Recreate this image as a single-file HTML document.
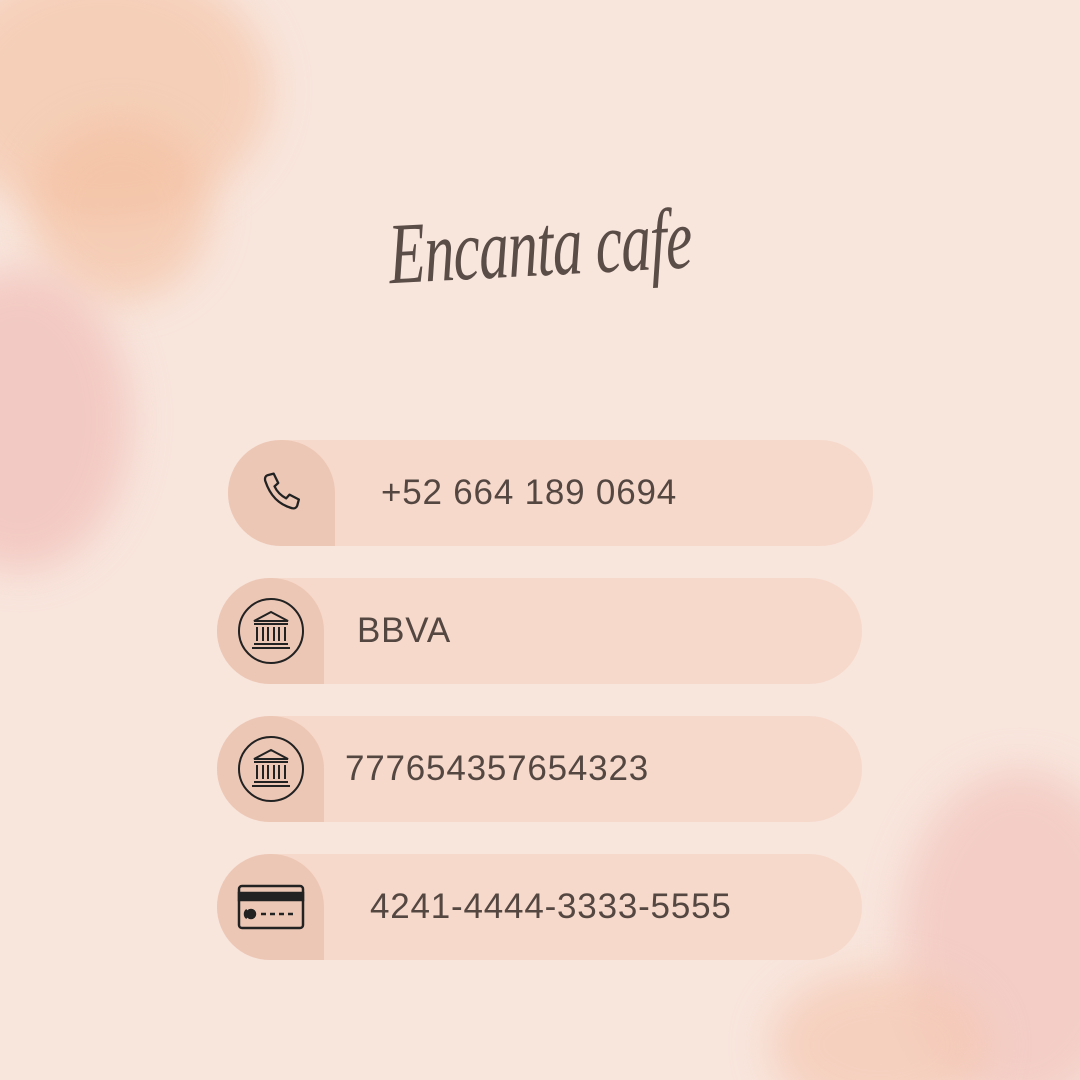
<!DOCTYPE html>
<html><head><meta charset="utf-8"><style>
html,body{margin:0;width:1080px;height:1080px;overflow:hidden}
body{background:#f8e5dc;position:relative;font-family:"Liberation Sans",sans-serif}
.b{position:absolute;border-radius:50%;filter:blur(20px)}
.row{position:absolute;height:106px;width:645px;background:#f6d9cb;border-radius:53px}
.ic{position:absolute;left:0;top:0;width:107px;height:106px;background:#edc7b5;border-radius:53px 53px 0 53px;display:flex;align-items:center;justify-content:center}
.t{position:absolute;top:0;line-height:106px;font-size:35px;color:#544742;letter-spacing:0.8px}
h1{position:absolute;left:386px;top:205px;margin:0;font:italic 400 60px "Liberation Serif",cursive;color:#5a4c47;letter-spacing:-1px;transform:rotate(-3deg) scaleY(1.45);transform-origin:left top;white-space:nowrap}
</style></head><body>
<div class="b" style="left:-60px;top:-40px;width:330px;height:260px;background:#f5c8ad;opacity:.75"></div>
<div class="b" style="left:30px;top:120px;width:180px;height:180px;background:#f4bf9f;opacity:.6"></div>
<div class="b" style="left:-90px;top:270px;width:220px;height:300px;background:#f1c1bb;opacity:.75"></div>
<div class="b" style="left:900px;top:770px;width:240px;height:340px;background:#f2c6bf;opacity:.75"></div>
<div class="b" style="left:770px;top:970px;width:220px;height:150px;background:#f5c8b3;opacity:.7"></div>
<h1>Encanta cafe</h1>
<div class="row" style="left:228px;top:440px"><div class="ic"><svg width="50" height="50" viewBox="0 0 24 24" fill="none" stroke="#222" stroke-width="1.1" stroke-linejoin="round"><path d="M5 3.5l3 -0.8 2.2 4.5-1.8 1.6c1 2.2 3 4.4 5.6 5.8l1.6-1.8 4.5 2.3-.8 3c-.3 1-1.4 1.5-2.4 1.2C10.5 17.6 6.4 13.5 4 6.3 3.6 5 4 3.8 5 3.5z"/></svg></div><div class="t" style="left:153px">+52 664 189 0694</div></div>
<div class="row" style="left:217px;top:578px"><div class="ic"><svg width="68" height="68" viewBox="0 0 68 68" fill="none" stroke="#222" stroke-width="2"><circle cx="34" cy="34" r="32"/><path d="M17 24L34 15 51 24Z M17 27h34 M20 30v14 M26 30v14 M31 30v14 M37 30v14 M42 30v14 M48 30v14 M17 47h34 M15 51h38"/></svg></div><div class="t" style="left:140px">BBVA</div></div>
<div class="row" style="left:217px;top:716px"><div class="ic"><svg width="68" height="68" viewBox="0 0 68 68" fill="none" stroke="#222" stroke-width="2"><circle cx="34" cy="34" r="32"/><path d="M17 24L34 15 51 24Z M17 27h34 M20 30v14 M26 30v14 M31 30v14 M37 30v14 M42 30v14 M48 30v14 M17 47h34 M15 51h38"/></svg></div><div class="t" style="left:128px">777654357654323</div></div>
<div class="row" style="left:217px;top:854px"><div class="ic"><svg width="68" height="46" viewBox="0 0 68 46" fill="none" stroke="#222" stroke-width="2.5"><rect x="2" y="2" width="64" height="42" rx="3"/><rect x="2" y="9" width="64" height="7" fill="#222"/><circle cx="14" cy="30" r="4" fill="#222"/><path d="M10 26a5 5 0 0 0 0 8 M24 30h5 M33 30h5 M42 30h5 M51 30h5"/></svg></div><div class="t" style="left:153px">4241-4444-3333-5555</div></div>
</body></html>
